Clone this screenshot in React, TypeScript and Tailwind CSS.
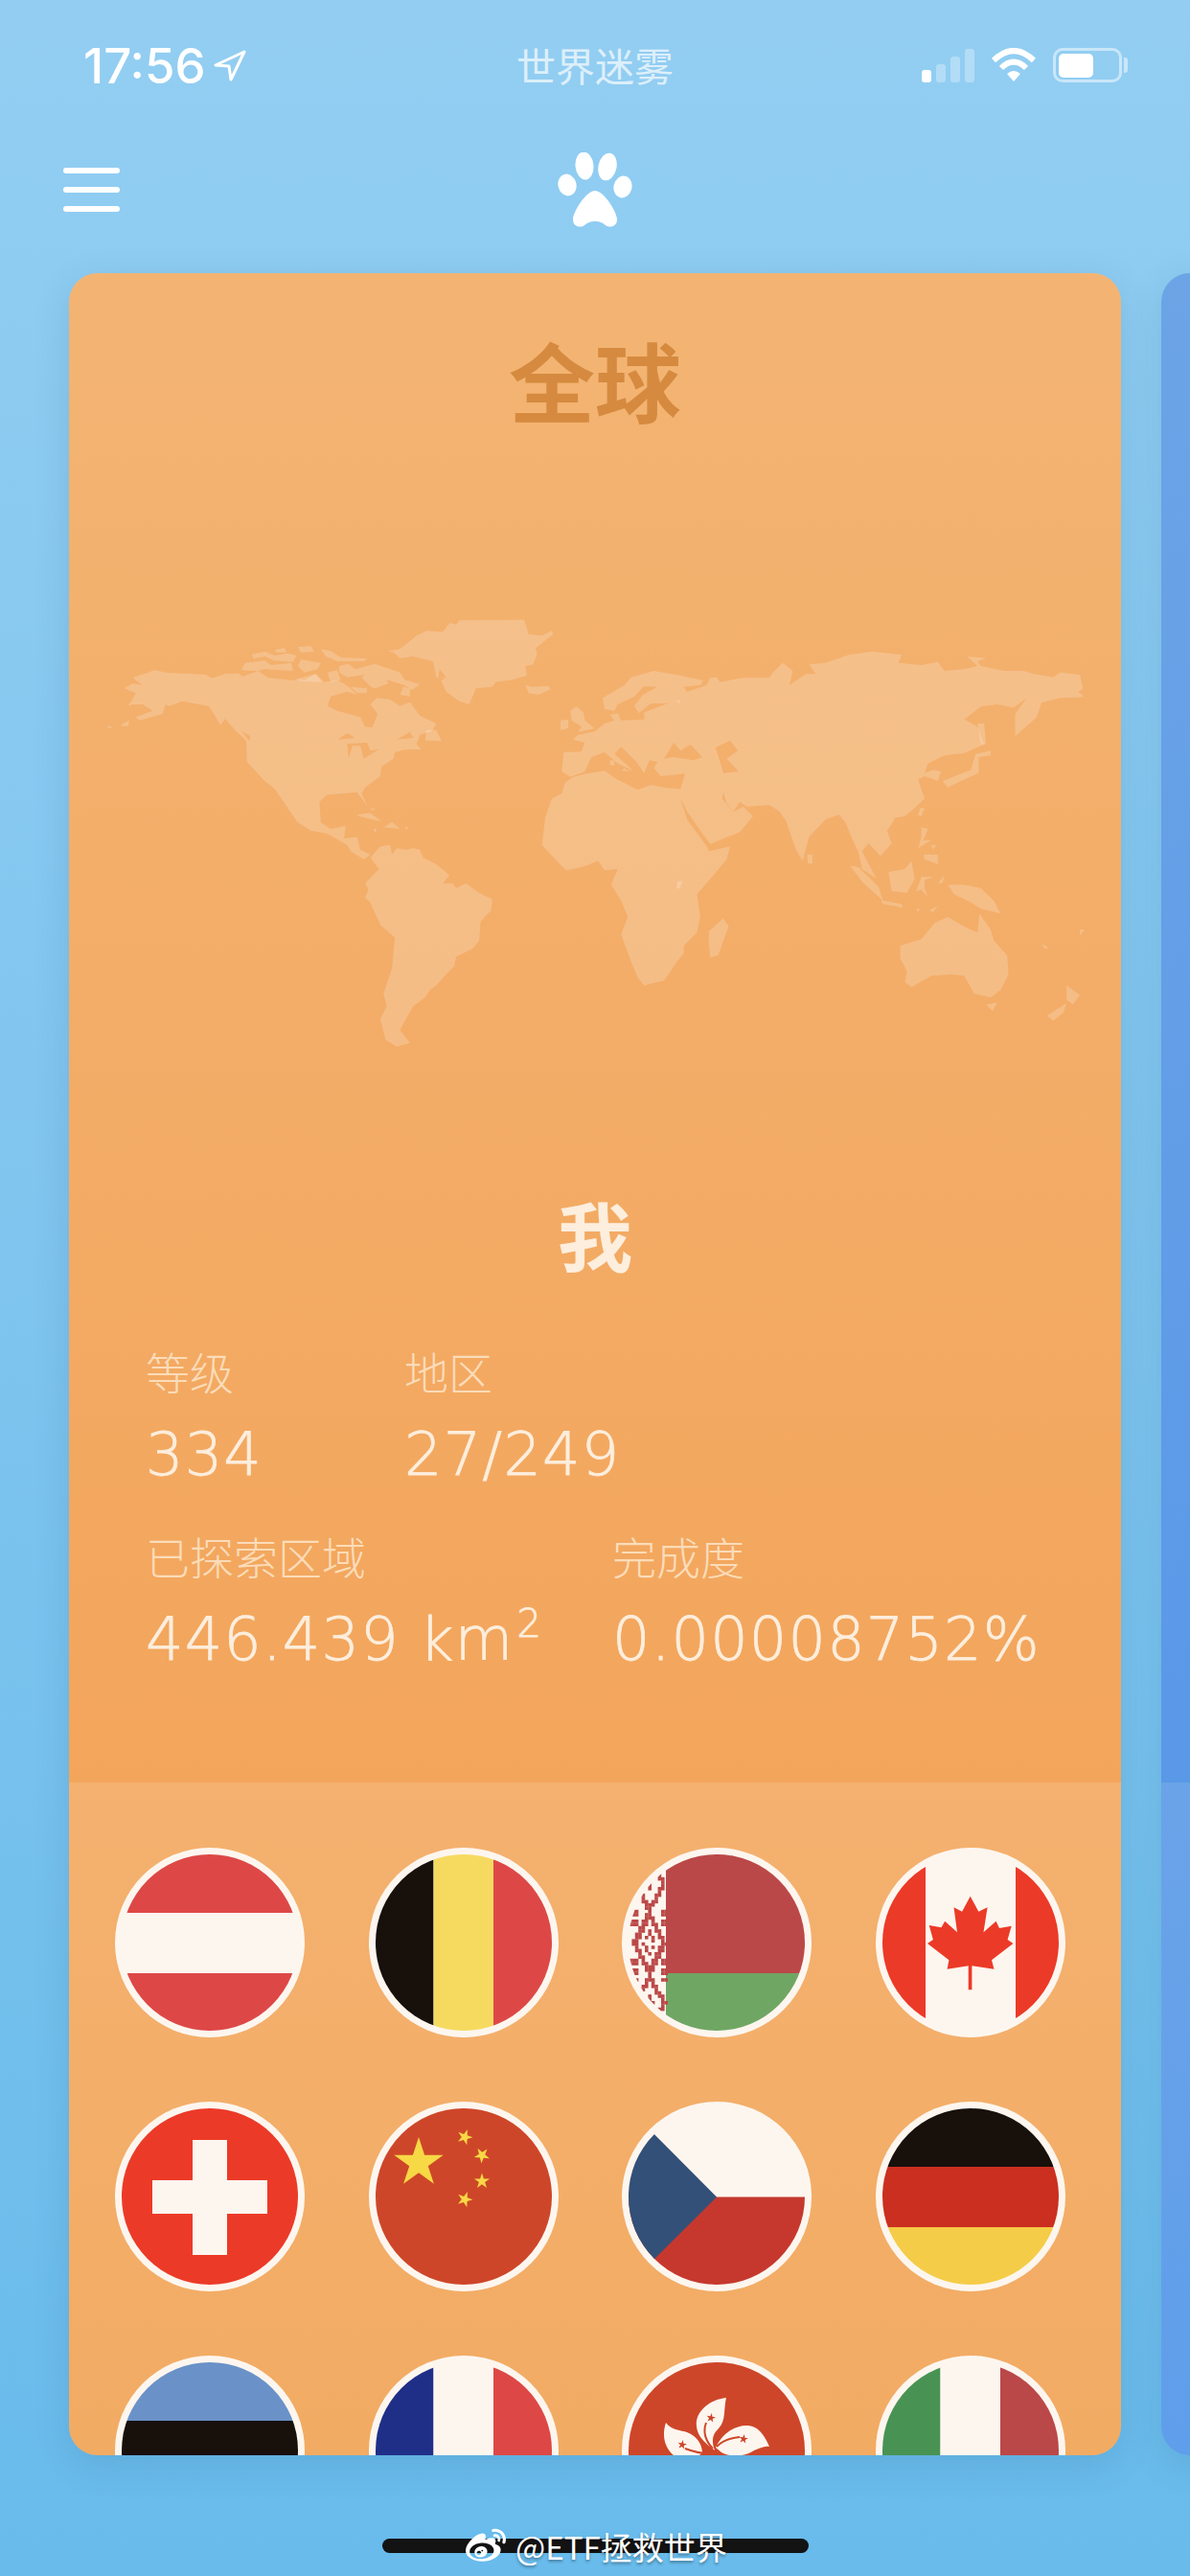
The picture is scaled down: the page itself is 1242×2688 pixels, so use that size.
import React from "react";
import { FaWeibo } from "react-icons/fa";

const CREAM = "#fdf6ef";
const CJK = "font-['Noto_Sans_CJK_SC',sans-serif]";

const LAND = [
  "M85,262 L118,238 135,245 195,252 205,263 225,250 245,248 252,258 275,240 290,262 330,270 335,265 345,270 362,250 375,275 395,270 405,280 415,295 425,315 440,325 410,305 385,320 380,350 395,365 430,385 437,415 448,417 456,375 445,345 455,325 475,330 490,350 505,338 520,380 545,405 538,430 520,440 515,470 522,485 497,487 482,495 480,515 462,540 460,570 437,605 432,625 441,665 425,620 400,625 380,628 368,650 370,715 385,735 408,725 405,765 425,760 430,800 445,815 435,830 415,805 410,785 380,750 355,740 335,715 325,685 300,610 285,585 258,525 257,460 240,425 225,390 218,410 208,375 200,350 160,335 140,350 135,345 130,375 95,395 90,385 115,365 100,345 80,345 90,310 72,295 85,280 100,285 Z",
  "M410,468 L440,465 445,490 458,485 435,515 430,475 418,475 412,515 Z",
  "M395,455 L410,435 422,450 Z",
  "M250,428 L263,445 262,460 Z",
  "M485,455 L505,432 510,450 Z",
  "M748,572 L735,555 738,495 765,493 770,465 752,455 760,440 785,430 800,405 815,395 808,378 820,372 825,395 860,392 860,370 895,342 870,342 852,372 845,350 858,315 880,290 860,288 845,320 820,345 815,365 800,360 797,325 830,285 840,260 875,240 915,255 950,270 945,285 920,290 925,305 955,285 960,262 970,260 975,275 1010,262 1050,262 1055,245 1070,215 1085,240 1080,285 1105,250 1120,250 1110,220 1135,215 1170,190 1205,180 1250,190 1245,215 1280,222 1305,212 1315,240 1345,235 1365,225 1350,195 1378,200 1365,210 1370,225 1405,240 1435,240 1450,250 1480,260 1490,245 1520,252 1525,295 1518,305 1527,322 1490,325 1462,340 1455,385 1422,445 1422,375 1440,325 1420,355 1395,345 1370,352 1345,392 1365,415 1375,470 1345,498 1315,505 1290,530 1285,560 1298,550 1310,555 1305,585 1285,570 1275,580 1285,640 1270,670 1255,695 1240,700 1235,720 1228,740 1235,780 1218,820 1200,780 1190,805 1212,890 1190,860 1185,810 1175,765 1165,715 1155,690 1135,705 1110,760 1100,835 1090,800 1075,710 1065,680 1050,660 1015,665 1005,650 995,680 985,655 980,620 978,640 995,682 1010,665 1025,695 1005,745 960,782 945,740 925,680 915,640 925,705 955,790 958,805 990,790 985,830 965,880 940,940 945,1010 940,1060 920,1100 920,1125 910,1150 890,1210 860,1225 850,1200 840,1150 825,1065 835,1010 825,960 810,910 820,860 800,865 790,835 770,852 742,865 725,830 705,785 710,700 720,640 735,625 740,590 752,572 772,562 800,553 818,578 850,612 870,597 890,605 915,610 922,562 885,570 875,545 880,525 868,520 860,560 848,525 825,478 815,500 845,555 820,530 800,495 780,510 770,555 Z",
  "M890,515 L905,465 915,490 930,470 948,510 935,520 905,510 Z",
  "M968,480 L990,458 1002,490 985,515 1003,555 980,560 975,525 Z",
  "M472,178 L490,172 500,155 515,130 530,115 555,118 565,90 575,95 580,82 678,80 685,125 705,130 720,115 722,125 695,170 698,185 692,220 680,225 682,255 660,268 635,275 630,290 605,295 600,320 595,345 580,335 560,305 552,270 560,262 545,260 540,210 510,195 490,200 480,182 Z",
  "M550,235 L560,260 548,262 Z",
].join(" ");

const ISLANDS = [
  "M255,215 L285,208 295,222 325,215 328,240 285,235 275,240 250,238 Z",
  "M265,188 L285,180 300,192 320,185 333,192 328,212 300,208 285,195 268,202 Z",
  "M335,165 L355,163 360,180 340,182 Z",
  "M300,175 L315,168 318,182 303,182 Z",
  "M370,172 L385,178 400,198 440,202 435,210 395,210 378,195 Z",
  "M398,225 L412,218 422,235 452,218 490,245 497,268 520,282 508,300 497,285 470,268 472,280 452,295 446,290 432,262 437,252 410,260 398,245 Z",
  "M340,205 L370,215 365,235 345,245 335,225 Z",
  "M335,265 L362,250 372,275 338,272 Z",
  "M380,245 L395,238 400,270 385,275 Z",
  "M415,290 L440,295 440,310 425,310 Z",
  "M495,290 L505,295 505,320 490,315 Z",
  "M530,425 L545,425 553,460 528,458 Z",
  "M45,412 L55,415 50,420 Z",
  "M70,405 L80,395 78,413 68,413 Z",
  "M78,345 L82,342 82,350 Z",
  "M680,285 L690,290 715,287 718,298 700,315 685,310 Z",
  "M445,825 L460,790 475,785 478,815 485,795 500,800 510,795 520,800 525,825 545,845 565,880 555,905 570,905 575,920 590,905 610,935 630,955 628,990 612,1025 610,1085 600,1110 575,1135 572,1165 560,1190 545,1225 535,1240 528,1262 510,1290 495,1345 490,1365 505,1405 485,1417 468,1395 460,1330 470,1290 465,1250 478,1170 482,1075 460,1035 445,965 437,950 442,925 437,905 458,860 Z",
  "M425,690 L445,685 462,712 430,697 Z",
  "M465,730 L478,713 490,735 Z",
  "M450,735 L455,735 452,748 Z",
  "M497,728 L502,728 500,738 Z",
  "M445,670 L453,672 448,678 Z",
  "M748,365 L757,352 768,370 770,395 785,420 760,432 765,415 750,395 Z",
  "M733,395 L745,392 745,420 733,425 Z",
  "M808,520 L815,520 815,538 808,535 Z",
  "M830,545 L840,555 825,552 Z",
  "M908,335 L914,330 914,342 Z",
  "M910,900 L918,898 914,922 909,920 Z",
  "M958,1055 L980,1015 988,1040 972,1130 960,1138 958,1095 Z",
  "M1107,815 L1115,815 1115,843 1108,843 Z",
  "M1362,500 L1385,490 1385,505 1367,510 1367,560 1335,590 1320,605 1312,585 1330,570 1355,550 Z",
  "M1365,405 L1375,405 1378,470 1370,470 Z",
  "M1278,670 L1285,670 1280,695 1275,692 Z",
  "M1280,730 L1290,735 1283,770 1295,770 1275,795 1280,760 Z",
  "M1295,785 L1302,785 1298,800 Z",
  "M1283,815 L1305,815 1305,845 1285,830 Z",
  "M1172,850 L1185,855 1215,915 1222,960 1190,900 Z",
  "M1218,958 L1250,970 1252,982 1222,970 Z",
  "M1230,870 L1255,860 1265,835 1270,890 1258,935 1235,930 Z",
  "M1272,930 L1280,885 1298,885 1285,895 1285,920 1290,950 1280,925 Z",
  "M1320,910 L1345,910 1370,920 1390,960 1400,1000 1370,985 1355,965 1330,940 Z",
  "M1272,985 L1278,985 1275,995 Z",
  "M1292,990 L1305,975 1298,995 Z",
  "M1305,905 L1315,880 1312,905 Z",
  "M1248,1100 L1280,1080 1300,1030 1320,1010 1345,1040 1365,1060 1368,1000 1385,1050 1390,1085 1410,1130 1412,1190 1400,1240 1385,1262 1360,1250 1345,1195 1325,1190 1295,1195 1265,1230 1255,1215 1258,1180 1248,1140 Z",
  "M1378,1285 L1395,1278 1388,1305 Z",
  "M1500,1225 L1520,1255 1510,1285 1500,1270 Z",
  "M1500,1280 L1495,1310 1480,1335 1470,1320 Z",
  "M1462,1095 L1472,1105 1468,1112 Z",
  "M1520,1050 L1528,1050 1520,1068 Z",
].join(" ");

function star(cx: number, cy: number, r: number, rot = 0) {
  const pts: string[] = [];
  for (let i = 0; i < 10; i++) {
    const rad = i % 2 === 0 ? r : r * 0.382;
    const a = ((-90 + rot + i * 36) * Math.PI) / 180;
    pts.push(`${(cx + rad * Math.cos(a)).toFixed(1)},${(cy + rad * Math.sin(a)).toFixed(1)}`);
  }
  return pts.join(" ");
}

function belarusCells() {
  const out: React.ReactElement[] = [];
  const s = 3.4;
  for (let y = 7; y < 191; y += s) {
    for (let x = 7; x < 46; x += s) {
      const dx = Math.abs(x - 27);
      const dy = Math.abs(y - 98);
      const t = dx / 14 + dy / 28;
      const dy2 = Math.abs(dy - 62);
      const t2 = dx / 15 + dy2 / 26;
      const on =
        (t > 0.9 && t < 1.3) ||
        (t > 0.32 && t < 0.5) ||
        (dy > 28 && t2 > 0.85 && t2 < 1.2) ||
        (dy > 28 && t2 < 0.3) ||
        (dx > 13 && dy > 14 && dy < 40 && Math.round(y / s) % 3 !== 0);
      if (on) out.push(<rect key={`${x}-${y}`} x={x} y={y} width={s + 0.2} height={s + 0.2} fill="#bb4848" />);
    }
  }
  return out;
}

const MAPLE =
  "98.7,50.7 107.3,66.7 116.6,62.3 112.5,88.3 125.6,76.7 129,84 141.7,81.7 137.6,96 143.4,100 121,117.3 123.5,126.7 100.4,123.3 100.4,148.3 96.7,148.3 96.7,123.3 74.6,126.7 76.4,117.3 54,100 59.9,96 55.7,81 68.5,83.3 72.2,76.7 85,88.3 81.5,62.3 90.1,66.7";

const FLAGS: React.ReactNode[] = [
  <>
    <rect x="0" y="0" width="198" height="68" fill="#dd4847" />
    <rect x="0" y="68" width="198" height="63" fill={CREAM} />
    <rect x="0" y="131" width="198" height="67" fill="#dd4847" />
  </>,
  <>
    <rect x="0" y="0" width="67.5" height="198" fill="#17100b" />
    <rect x="67.5" y="0" width="62.5" height="198" fill="#f6da60" />
    <rect x="130" y="0" width="68" height="198" fill="#dd4847" />
  </>,
  <>
    <rect x="0" y="0" width="198" height="198" fill={CREAM} />
    <rect x="46" y="0" width="152" height="131" fill="#bb4848" />
    <rect x="46" y="131" width="152" height="67" fill="#70a664" />
    {belarusCells()}
  </>,
  <>
    <rect x="0" y="0" width="198" height="198" fill={CREAM} />
    <rect x="0" y="0" width="52" height="198" fill="#ec3a28" />
    <rect x="146" y="0" width="52" height="198" fill="#ec3a28" />
    <polygon points={MAPLE} fill="#ec3a28" />
  </>,
  <>
    <rect x="0" y="0" width="198" height="198" fill="#ec3a28" />
    <rect x="81" y="40" width="36" height="120" fill={CREAM} />
    <rect x="39" y="82" width="120" height="35" fill={CREAM} />
  </>,
  <>
    <rect x="0" y="0" width="198" height="198" fill="#ce4629" />
    <polygon points={star(52, 64, 27)} fill="#f7d845" />
    <polygon points={star(100, 37, 8.5, 20)} fill="#f7d845" />
    <polygon points={star(118, 56, 8.5, 40)} fill="#f7d845" />
    <polygon points={star(118, 83, 8.5, 0)} fill="#f7d845" />
    <polygon points={star(100, 102, 8.5, 20)} fill="#f7d845" />
  </>,
  <>
    <rect x="0" y="0" width="198" height="99.5" fill={CREAM} />
    <rect x="0" y="99.5" width="198" height="99" fill="#c6382d" />
    <polygon points="0,0 99,99.5 0,198" fill="#335078" />
  </>,
  <>
    <rect x="0" y="0" width="198" height="68" fill="#17100b" />
    <rect x="0" y="68" width="198" height="63" fill="#cb2f20" />
    <rect x="0" y="131" width="198" height="67" fill="#f5cc47" />
  </>,
  <>
    <rect x="0" y="0" width="198" height="68" fill="#6a92c8" />
    <rect x="0" y="68" width="198" height="63" fill="#17100b" />
    <rect x="0" y="131" width="198" height="67" fill={CREAM} />
  </>,
  <>
    <rect x="0" y="0" width="67.5" height="198" fill="#1f2f88" />
    <rect x="67.5" y="0" width="62.5" height="198" fill={CREAM} />
    <rect x="130" y="0" width="68" height="198" fill="#dd4847" />
  </>,
  <>
    <rect x="0" y="0" width="198" height="198" fill="#ce4629" />
    <path d="M109,44 C90,46 76,60 78,74 C79,85 88,92 97,99 C93,88 95,82 101,76 C109,68 106,56 109,44 Z" fill={CREAM} />
    <path d="M46,70 C52,78 62,78 68,80 C78,84 84,92 84,102 C78,106 70,109 60,108 C48,102 40,88 46,70 Z" fill={CREAM} />
    <path d="M98,96 C104,82 118,72 132,73 C144,74 150,86 154,95 C148,94 144,97 138,99 C128,106 112,106 104,101 Z" fill={CREAM} />
    <path d="M88,70 C84,80 88,90 95,97 M66,97 C74,100 84,103 94,102 M123,85 C112,86 104,90 99,95" fill="none" stroke="#ce4629" strokeWidth="2" />
    <polygon points={star(93, 65, 5, 10)} fill="#ce4629" />
    <polygon points={star(63, 93, 5, 10)} fill="#ce4629" />
    <polygon points={star(127, 87, 5, 10)} fill="#ce4629" />
  </>,
  <>
    <rect x="0" y="0" width="67.5" height="198" fill="#489353" />
    <rect x="67.5" y="0" width="62.5" height="198" fill={CREAM} />
    <rect x="130" y="0" width="68" height="198" fill="#bb4848" />
  </>,
];

function Flag({ children }: { children: React.ReactNode }) {
  return (
    <div className="h-[198px] w-[198px] rounded-full bg-[#fdf6ef] p-[7px]">
      <div className="h-full w-full overflow-hidden rounded-full">
        <svg viewBox="7 7 184 184" className="block h-full w-full">
          {children}
        </svg>
      </div>
    </div>
  );
}

function Stat({ label, value, sup }: { label: string; value: string; sup?: string }) {
  return (
    <div className="flex flex-col">
      <div className={`${CJK} text-[46px] font-light leading-[50px] text-[#fbdcb9]`}>{label}</div>
      <div className="mt-[32px] whitespace-nowrap font-['DejaVu_Sans',sans-serif] text-[62px] font-extralight leading-[62px] tracking-[1.2px] text-[#fdeedd] [-webkit-text-stroke:0.8px_#fdeedd]">
        {value}
        {sup && <span className="ml-[3px] align-[24px] text-[40px] leading-[0] tracking-normal">{sup}</span>}
      </div>
    </div>
  );
}

function Paw() {
  return (
    <svg width="78" height="78" viewBox="0 0 78 78" fill="#fff">
      <ellipse cx="28" cy="14" rx="9.5" ry="14.5" transform="rotate(-5 28 14)" />
      <ellipse cx="52" cy="15" rx="9.5" ry="14.5" transform="rotate(12 52 15)" />
      <ellipse cx="10" cy="34" rx="9.5" ry="11.5" transform="rotate(-15 10 34)" />
      <ellipse cx="68" cy="36" rx="9.5" ry="11.5" transform="rotate(12 68 36)" />
      <path d="M39,40 C48,40 62,62 62,70 C62,78 54,79 50,76 C46,73 44,72 39,72 C34,72 32,73 28,76 C24,79 16,78 16,70 C16,62 30,40 39,40 Z" />
    </svg>
  );
}

export default function App() {
  return (
    <div className="relative flex h-[2688px] w-[1242px] flex-col overflow-hidden bg-linear-to-b from-[#93cef2] to-[#68bbeb]">
      {/* Status bar */}
      <div className="grid h-[136px] shrink-0 grid-cols-[1fr_auto_1fr] items-center px-[65px]">
        <div className="flex items-center gap-[8px] pl-[22px]">
          <span className="font-['Inter',sans-serif] text-[51px] font-medium leading-none text-white">17:56</span>
          <svg width="34" height="33" viewBox="0 0 34 33" fill="none" stroke="#fff" strokeWidth="3" strokeLinejoin="round">
            <polygon points="32,2 2,16 16,17 18,31" />
          </svg>
        </div>
        <div className={`${CJK} -mt-[2px] text-[41px] leading-none text-white/70`}>世界迷雾</div>
        <div className="flex items-center justify-end gap-[17px]">
          <div className="flex h-[35px] items-end gap-[5px]">
            <div className="h-[13px] w-[10px] rounded-[3px] bg-white" />
            <div className="h-[19px] w-[10px] rounded-[3px] bg-white/30" />
            <div className="h-[27px] w-[10px] rounded-[3px] bg-white/30" />
            <div className="h-[35px] w-[10px] rounded-[3px] bg-white/30" />
          </div>
          <svg width="48" height="36" viewBox="0 0 48 36" fill="none" stroke="#fff" strokeWidth="6">
            <path d="M3,13 Q24,-7 45,13" />
            <path d="M11,21 Q24,8 37,21" />
            <path d="M17,27 Q24,21 31,27 L24,35 Z" fill="#fff" stroke="none" />
          </svg>
          <div className="flex items-center">
            <div className="flex h-[36px] w-[72px] items-center rounded-[10px] border-[3px] border-white/50 px-[3px]">
              <div className="h-[25px] w-[36px] rounded-[5px] bg-white" />
            </div>
            <div className="ml-[2px] h-[16px] w-[4px] rounded-r-[3px] bg-white/50" />
          </div>
        </div>
      </div>

      {/* Nav */}
      <div className="mb-[25px] grid h-[124px] shrink-0 grid-cols-[1fr_auto_1fr] items-center px-[66px]">
        <div className="flex flex-col gap-[14px]">
          <div className="h-[6px] w-[59px] rounded-full bg-white" />
          <div className="h-[6px] w-[59px] rounded-full bg-white" />
          <div className="h-[6px] w-[59px] rounded-full bg-white" />
        </div>
        <Paw />
        <div />
      </div>

      {/* Cards */}
      <div className="flex h-[2277px] shrink-0 gap-[42px] pl-[72px]">
        <div className="flex w-[1098px] shrink-0 flex-col overflow-hidden rounded-[30px] shadow-[0_10px_36px_rgba(40,90,130,0.16)]">
          <div className="flex h-[1575px] shrink-0 flex-col bg-linear-to-b from-[#f3b473] to-[#f3a55b]">
            <div className={`${CJK} mt-[60px] text-center text-[90px] font-bold leading-[100px] text-[#d58a3f]`}>全球</div>
            <svg viewBox="0 0 1568 1500" preserveAspectRatio="none" className="ml-[8px] mt-[175px] block h-[500px] w-[1080px] shrink-0">
              <path d={LAND} fill="#fff" fillOpacity="0.2" fillRule="evenodd" />
              <path d={ISLANDS} fill="#fff" fillOpacity="0.2" />
            </svg>
            <div className={`${CJK} mt-[122px] text-center text-[78px] font-bold leading-[90px] text-[#fdeedd]`}>我</div>
            <div className="mt-[73px] flex pl-[80px]">
              <div className="w-[270px]">
                <Stat label="等级" value="334" />
              </div>
              <Stat label="地区" value="27/249" />
            </div>
            <div className="mt-[49px] flex pl-[80px]">
              <div className="w-[487px]">
                <Stat label="已探索区域" value="446.439 km" sup="2" />
              </div>
              <Stat label="完成度" value="0.00008752%" />
            </div>
          </div>
          <div className="min-h-0 flex-1 bg-linear-to-b from-[#f4b16f] to-[#f2ab63] pl-[48px] pt-[68px]">
            <div className="grid grid-cols-[repeat(4,198px)] gap-x-[66.5px] gap-y-[67px]">
              {FLAGS.map((f, i) => (
                <Flag key={i}>{f}</Flag>
              ))}
            </div>
          </div>
        </div>
        <div className="flex w-[200px] shrink-0 flex-col overflow-hidden rounded-[30px] shadow-[0_10px_36px_rgba(40,90,130,0.16)]">
          <div className="h-[1575px] shrink-0 bg-linear-to-b from-[#6ca4e6] to-[#5a98e8]" />
          <div className="flex-1 bg-linear-to-b from-[#6aa3e8] to-[#5f9eeb]" />
        </div>
      </div>

      {/* Home indicator and watermark overlay */}
      <div className="absolute left-[399px] top-[2649px] h-[15px] w-[445px] rounded-full bg-[#131313]" />
      <div className="absolute left-[484px] top-[2636px] flex items-center gap-[8px]">
        <FaWeibo className="h-[42px] w-[46px] text-white" />
        <span className={`${CJK} text-[33px] leading-[40px] text-white [text-shadow:0_2px_3px_rgba(0,0,0,0.35)]`}>@ETF拯救世界</span>
      </div>
    </div>
  );
}
